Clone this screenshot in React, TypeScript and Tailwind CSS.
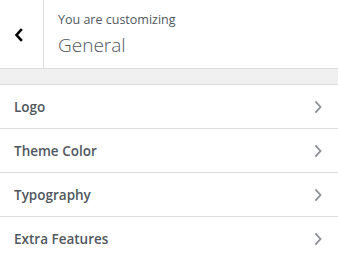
import React from "react";

const sections = ["Logo", "Theme Color", "Typography", "Extra Features"];

const Chevron = ({ dir }: { dir: "left" | "right" }) => (
  <svg
    width="10"
    height="14"
    viewBox="0 0 10 14"
    fill="none"
    stroke="currentColor"
    strokeWidth={dir === "left" ? 2.6 : 1.8}
    strokeLinecap="square"
  >
    {dir === "left" ? (
      <path d="M7 2 L2.5 7 L7 12" />
    ) : (
      <path d="M3 2 L7.5 7 L3 12" />
    )}
  </svg>
);

const App = () => {
  return (
    <div className="w-[338px] h-[259px] bg-white overflow-hidden font-['Open_Sans',sans-serif]">
      <div className="flex h-[69px] border-b border-[#dcdcde]">
        <button className="w-[44px] flex items-center justify-center pr-[5px] pt-[1px] border-r border-[#dcdcde] text-black">
          <Chevron dir="left" />
        </button>
        <div className="pl-[14px] pt-[11px]">
          <div className="text-[12.5px] leading-[18px] text-[#50575e]">
            You are customizing
          </div>
          <div className="text-[19px] leading-[26px] font-light text-[#50575e] mt-[3px]">
            General
          </div>
        </div>
      </div>
      <div className="h-[16px] bg-[#f0f0f1] border-b border-[#dcdcde]" />
      <ul>
        {sections.map((s) => (
          <li
            key={s}
            className="h-[44px] flex items-center justify-between pl-[14px] pr-[15px] border-b border-[#dcdcde] text-[13.5px] font-semibold text-[#50575e]"
          >
            <span className="pt-[1px]">{s}</span>
            <span className="text-[#8c8f94]">
              <Chevron dir="right" />
            </span>
          </li>
        ))}
      </ul>
    </div>
  );
};

export default App;
